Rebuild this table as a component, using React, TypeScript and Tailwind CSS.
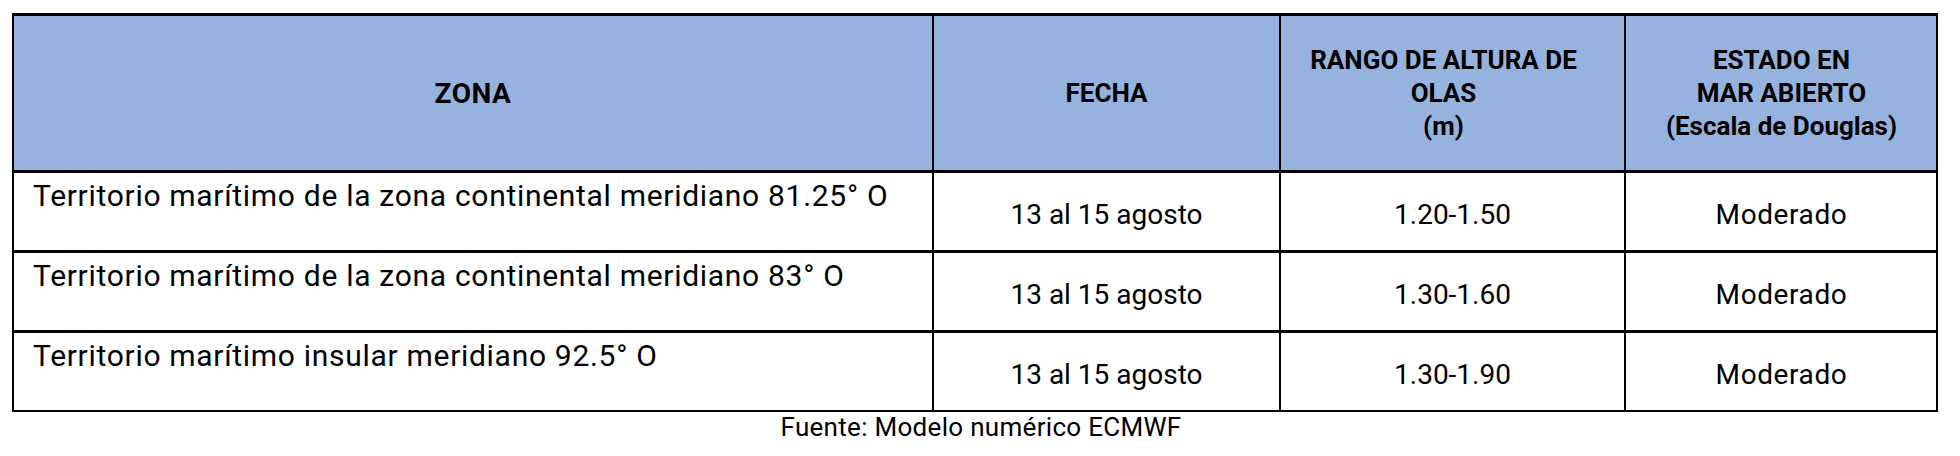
import React from 'react';

interface Row {
  zona: string;
  fecha: string;
  rango: string;
  estado: string;
}

const rows: Row[] = [
  {
    zona: 'Territorio marítimo de la zona continental meridiano 81.25° O',
    fecha: '13 al 15 agosto',
    rango: '1.20-1.50',
    estado: 'Moderado',
  },
  {
    zona: 'Territorio marítimo de la zona continental meridiano 83° O',
    fecha: '13 al 15 agosto',
    rango: '1.30-1.60',
    estado: 'Moderado',
  },
  {
    zona: 'Territorio marítimo insular meridiano 92.5° O',
    fecha: '13 al 15 agosto',
    rango: '1.30-1.90',
    estado: 'Moderado',
  },
];

const cols = 'grid grid-cols-[918px_347px_345px_313px]';

const HeadCell: React.FC<{ children: React.ReactNode; first?: boolean }> = ({ children, first }) => (
  <div
    className={`flex items-center justify-center text-center font-bold text-[26px] leading-[33px] ${
      first ? '' : 'border-l-2 border-black'
    }`}
  >
    {children}
  </div>
);

export default function App() {
  return (
    <div className="w-[1960px] h-[456px] bg-white text-black font-['Roboto',sans-serif]">
      <div className="pt-[13px] pl-[12px]">
        <div className="w-[1926px] border-t-[3px] border-x-2 border-b-2 border-black">
          <div className={`${cols} h-[157px] bg-[#95b3de] border-b-[3px] border-black`}>
            <HeadCell first>
              <span className="text-[28px] tracking-[0.5px]">ZONA</span>
            </HeadCell>
            <HeadCell>FECHA</HeadCell>
            <HeadCell>
              <div className="pr-[18px]">
                RANGO DE ALTURA DE
                <br />
                OLAS
                <br />
                (m)
              </div>
            </HeadCell>
            <HeadCell>
              <div>
                ESTADO EN
                <br />
                MAR ABIERTO
                <br />
                (Escala de Douglas)
              </div>
            </HeadCell>
          </div>
          {rows.map((r, i) => {
            const last = i === rows.length - 1;
            return (
              <div
                key={i}
                className={`${cols} text-[28px] leading-[1.2] ${last ? 'h-[77px]' : 'h-[80px] border-b-[3px] border-black'}`}
              >
                <div className="pt-[5px] pl-[19px] text-[30px] tracking-[0.7px]">{r.zona}</div>
                <div className="flex items-center justify-center pt-[6px] border-l-2 border-black">{r.fecha}</div>
                <div className="flex items-center justify-center pt-[6px] border-l-2 border-black">{r.rango}</div>
                <div className="flex items-center justify-center pt-[6px] border-l-2 border-black tracking-[0.6px]">
                  {r.estado}
                </div>
              </div>
            );
          })}
        </div>
      </div>
      <p className="text-center text-[26px] leading-[1.2] pl-[2px] tracking-[0.3px]">Fuente: Modelo numérico ECMWF</p>
    </div>
  );
}
